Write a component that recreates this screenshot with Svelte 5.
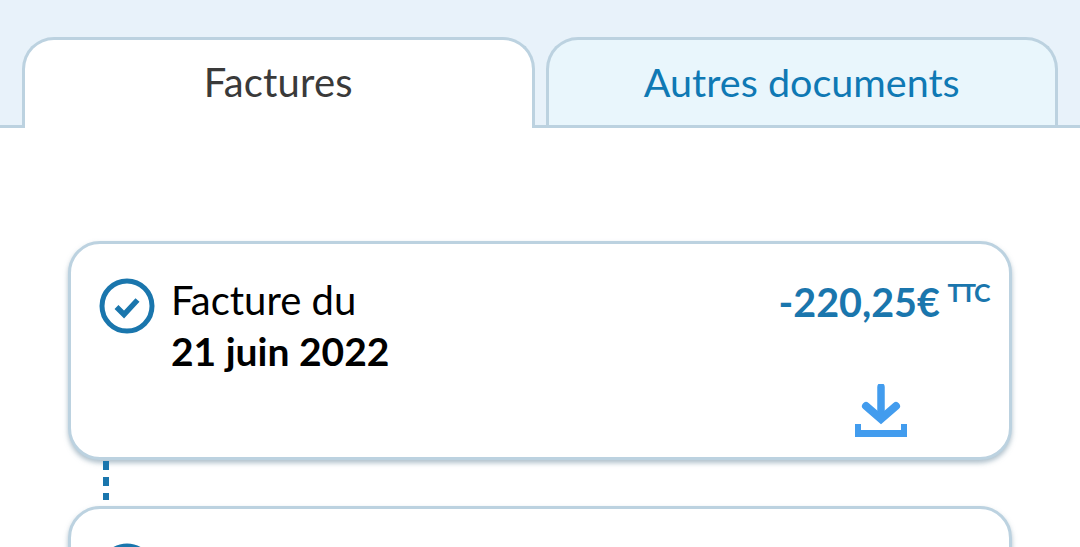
<script lang="ts">
  const invoices = [
    { label: 'Facture du', date: '21 juin 2022', amount: '-220,25€' },
    { label: 'Facture du', date: '21 mai 2022', amount: '-220,25€' }
  ];
</script>

<div class="page">
  <div class="tabs">
    <button type="button" class="tab active">Factures</button>
    <button type="button" class="tab">Autres documents</button>
  </div>

  <div class="list">
    {#each invoices as inv, i}
      {#if i > 0}
        <div class="link"></div>
      {/if}
      <article class="card">
        <svg class="check" viewBox="0 0 56 56" aria-hidden="true">
          <circle cx="28" cy="28" r="25" fill="none" stroke="#1a76ad" stroke-width="5" />
          <path d="M17.5 29l7.5 7.5L38.5 22" fill="none" stroke="#1a76ad" stroke-width="5.5" />
        </svg>
        <div class="title">
          <span>{inv.label}</span>
          <strong>{inv.date}</strong>
        </div>
        <div class="side">
          <div class="amount">{inv.amount} <sup>TTC</sup></div>
          <svg class="download" viewBox="0 0 52 53" aria-hidden="true">
            <path d="M26 3v30" fill="none" stroke="#429cee" stroke-width="7.5" stroke-linecap="round" />
            <path d="M11 22l15 13 15-13" fill="none" stroke="#429cee" stroke-width="8" stroke-linecap="round" />
            <path d="M0 40h6v6h40v-6h6v13H0z" fill="#429cee" />
          </svg>
        </div>
      </article>
    {/each}
  </div>
</div>

<style>
  :global(body) {
    margin: 0;
    background: #fff;
  }

  .page {
    height: 547px;
    overflow: hidden;
    font-family: Lato, "Liberation Sans", sans-serif;
    background: #fff;
  }

  .tabs {
    display: flex;
    gap: 11px;
    box-sizing: border-box;
    height: 128px;
    padding: 37px 22px 0;
    background: #e8f2fa;
    border-bottom: 3px solid #bcd2e0;
  }

  .tab {
    flex: 1;
    height: 88px;
    box-sizing: border-box;
    margin: 0;
    padding: 0 0 3px;
    font: inherit;
    font-size: 39.5px;
    color: #0f79b4;
    background: #e9f6fc;
    border: 3px solid #bcd2e0;
    border-bottom: none;
    border-radius: 32px 32px 0 0;
  }

  .tab.active {
    height: 91px;
    padding-bottom: 4px;
    font-size: 40px;
    letter-spacing: 0.2px;
    color: #3a3a3a;
    background: #fff;
    position: relative;
    z-index: 1;
  }

  .list {
    padding: 113px 68px 0;
  }

  .card {
    display: flex;
    box-sizing: border-box;
    height: 219px;
    padding: 34px 20px 0 28px;
    background: #fff;
    border: 3px solid #bcd2e0;
    border-radius: 32px;
    box-shadow: 0 3px 5px rgba(110, 140, 160, 0.55);
  }

  .check {
    flex-shrink: 0;
    width: 56px;
    height: 56px;
    margin-right: 16px;
  }

  .title {
    display: flex;
    flex-direction: column;
    flex: 1;
    font-size: 40px;
    line-height: 51px;
    color: #000;
    margin-top: -3px;
  }

  .title strong {
    font-size: 39px;
  }

  .side {
    display: flex;
    flex-direction: column;
  }

  .amount {
    font-size: 39.5px;
    font-weight: 700;
    line-height: 51px;
    color: #1a76ad;
    white-space: nowrap;
    margin-top: -2px;
  }

  .amount sup {
    margin-left: -2px;
    font-size: 25px;
    font-weight: 700;
    letter-spacing: -1.5px;
    line-height: 0;
    vertical-align: 15px;
  }

  .download {
    width: 52px;
    height: 53px;
    margin: 57px 0 0 76px;
  }

  .link {
    width: 6px;
    height: 39px;
    margin: 1px 0 6px 35px;
    background: repeating-linear-gradient(#1a76ad 0 9px, transparent 9px 16px);
  }
</style>
